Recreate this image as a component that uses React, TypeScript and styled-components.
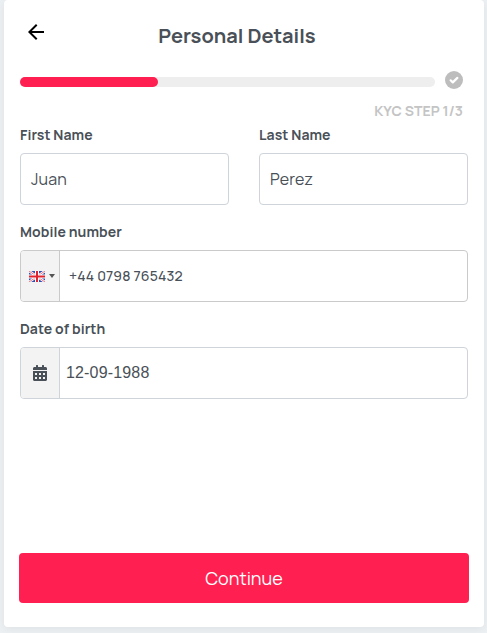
import React from 'react';
import styled, { createGlobalStyle } from 'styled-components';
import { FaCalendarAlt } from 'react-icons/fa';
import { MdArrowBack } from 'react-icons/md';

const GlobalStyle = createGlobalStyle`
  * { box-sizing: border-box; }
  body {
    margin: 0;
    background: #ecf0f3;
    font-family: Manrope, Inter, sans-serif;
    color: #495057;
    overflow: hidden;
  }
`;

const Page = styled.div`
  height: 633px;
  padding: 0 3px 6px 4px;
`;

const Card = styled.main`
  display: flex;
  flex-direction: column;
  height: 627px;
  padding: 0 16px 24px;
  background: #fff;
  border-radius: 4px;
  box-shadow: 0 2px 8px rgba(0, 0, 0, 0.06);
`;

const Header = styled.header`
  display: grid;
  grid-template-columns: 32px 1fr 32px;
  align-items: center;
  height: 64px;
  padding-top: 8px;
`;

const BackButton = styled.button`
  display: flex;
  width: 32px;
  height: 24px;
  padding: 0 0 0 4px;
  margin-top: -8px;
  border: 0;
  background: none;
  color: #000;
`;

const Title = styled.h1`
  margin: 0 0 0 -14px;
  text-align: center;
  font-size: 20px;
  line-height: 28px;
  font-weight: 700;
`;

const ProgressRow = styled.div`
  display: flex;
  align-items: center;
  gap: 10px;
  height: 18px;
  margin-top: 7px;
`;

const Track = styled.div`
  width: 415px;
  height: 10px;
  margin-top: 4px;
  border-radius: 5px;
  background: #eeeeee;
`;

const Fill = styled.div`
  width: 138px;
  height: 10px;
  border-radius: 5px;
  background: #ff1f51;
`;

const Step = styled.div`
  height: 20px;
  margin: 12px 5px 0 0;
  text-align: right;
  font-size: 14px;
  line-height: 20px;
  font-weight: 700;
  letter-spacing: 0.05px;
  color: #c4c4c4;
`;

const NameRow = styled.div`
  display: grid;
  grid-template-columns: 1fr 1fr;
  column-gap: 30px;
`;

const Field = styled.label`
  display: block;
  height: 97px;
  padding-top: 4px;
`;

const Label = styled.span`
  display: block;
  height: 28px;
  font-size: 14px;
  line-height: 20px;
  font-weight: 700;
  letter-spacing: 0.06px;
`;

const Control = styled.span<{ $border?: string }>`
  display: flex;
  height: 52px;
  border: 1px solid ${(p) => p.$border ?? '#ced4da'};
  border-radius: 4px;
  overflow: hidden;
  background: #fff;
`;

const Addon = styled.span<{ $border: string; $shift?: number }>`
  display: flex;
  flex: none;
  align-items: center;
  justify-content: center;
  gap: 4px;
  width: 39px;
  padding-left: ${(p) => p.$shift ?? 0}px;
  border-right: 1px solid ${(p) => p.$border};
  background: #f3f3f3;
`;

const Input = styled.input<{
  $pad: number;
  $size?: number;
  $weight?: number;
  $spacing?: number;
  $lift?: number;
  $family?: string;
}>`
  flex: 1;
  min-width: 0;
  padding: 0 0 ${(p) => p.$lift ?? 0}px ${(p) => p.$pad}px;
  border: 0;
  outline: 0;
  background: none;
  color: #495057;
  font-family: ${(p) => p.$family ?? 'Manrope, Inter, sans-serif'};
  font-size: ${(p) => p.$size ?? 16}px;
  font-weight: ${(p) => p.$weight ?? 400};
  letter-spacing: ${(p) => p.$spacing ?? 0}px;
`;

const Caret = styled.span`
  border-left: 3px solid transparent;
  border-right: 3px solid transparent;
  border-top: 4px solid #555;
`;

const Continue = styled.button`
  height: 50px;
  margin: auto -1px 0;
  border: 0;
  border-radius: 4px;
  background: #ff1f51;
  color: #fff;
  font-family: Manrope, Inter, sans-serif;
  font-size: 18px;
  font-weight: 400;
`;

const CheckBadge = () => (
  <svg width="18" height="18" viewBox="0 0 18 18" fill="none">
    <circle cx="9" cy="9" r="9" fill="#bdbdbd" />
    <path d="M5.6 9.3 7.8 11.4 12.4 6.9" stroke="#fff" strokeWidth="2.2" strokeLinecap="round" strokeLinejoin="round" />
  </svg>
);

const UkFlag = () => (
  <svg width="16" height="11" viewBox="0 0 16 11">
    <path fill="#3550b4" d="M0 0h16v11H0z" />
    <path d="M0 0 16 11M16 0 0 11" stroke="#fff" strokeWidth="2.4" />
    <path d="M0 0 16 11M16 0 0 11" stroke="#e8505c" strokeWidth=".8" />
    <path d="M8 0v11M0 5.5h16" stroke="#fff" strokeWidth="4" />
    <path d="M8 0v11M0 5.5h16" stroke="#e0242f" strokeWidth="2" />
  </svg>
);

export default function App() {
  return (
    <>
      <GlobalStyle />
      <Page>
        <Card>
          <Header>
            <BackButton aria-label="Back"><MdArrowBack size={24} /></BackButton>
            <Title>Personal Details</Title>
          </Header>
          <ProgressRow>
            <Track><Fill /></Track>
            <CheckBadge />
          </ProgressRow>
          <Step>KYC STEP 1/3</Step>
          <NameRow>
            <Field>
              <Label>First Name</Label>
              <Control><Input $pad={10} $spacing={0.15} defaultValue="Juan" /></Control>
            </Field>
            <Field>
              <Label>Last Name</Label>
              <Control><Input $pad={10} $spacing={0.15} defaultValue="Perez" /></Control>
            </Field>
          </NameRow>
          <Field>
            <Label>Mobile number</Label>
            <Control $border="#cacaca">
              <Addon $border="#cacaca" $shift={4}><UkFlag /><Caret /></Addon>
              <Input $pad={9} $size={14} $weight={500} $spacing={0.14} $lift={2} defaultValue="+44 0798 765432" />
            </Control>
          </Field>
          <Field>
            <Label>Date of birth</Label>
            <Control>
              <Addon $border="#ced4da"><FaCalendarAlt size={16} /></Addon>
              <Input $pad={6} $spacing={0.16} $family="'Liberation Sans', Arial, sans-serif" defaultValue="12-09-1988" />
            </Control>
          </Field>
          <Continue>Continue</Continue>
        </Card>
      </Page>
    </>
  );
}
